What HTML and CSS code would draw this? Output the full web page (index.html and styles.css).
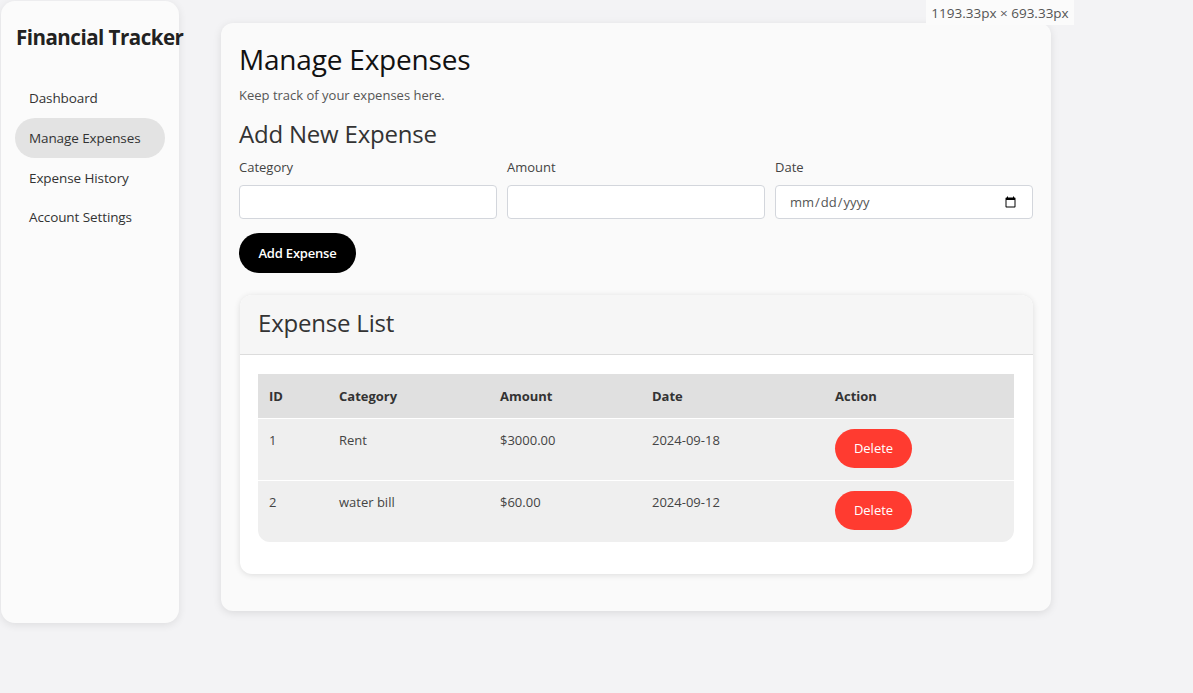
FILE: index.html
```html
<!DOCTYPE html>
<html lang="en">
<head>
<meta charset="utf-8">
<title>Financial Tracker</title>
<link rel="stylesheet" href="styles.css">
</head>
<body>
<div class="size-badge">1193.33px × 693.33px</div>
<div class="layout">
  <aside class="sidebar">
    <h2 class="brand">Financial Tracker</h2>
    <nav class="nav">
      <a class="nav-item">Dashboard</a>
      <a class="nav-item active">Manage Expenses</a>
      <a class="nav-item">Expense History</a>
      <a class="nav-item">Account Settings</a>
    </nav>
  </aside>
  <main class="main-card">
    <h1 class="page-title">Manage Expenses</h1>
    <p class="subtitle">Keep track of your expenses here.</p>
    <h2 class="section-title">Add New Expense</h2>
    <form class="expense-form">
      <div class="field">
        <label class="field-label">Category</label>
        <input class="field-input" type="text">
      </div>
      <div class="field">
        <label class="field-label">Amount</label>
        <input class="field-input" type="text">
      </div>
      <div class="field">
        <label class="field-label">Date</label>
        <input class="field-input date-input" type="date">
      </div>
    </form>
    <button class="btn-primary" type="button">Add Expense</button>
    <section class="list-card">
      <div class="list-header">
        <h2 class="list-title">Expense List</h2>
      </div>
      <div class="list-body">
        <table class="expense-table">
          <thead>
            <tr>
              <th class="col-id">ID</th>
              <th class="col-cat">Category</th>
              <th class="col-amt">Amount</th>
              <th class="col-date">Date</th>
              <th class="col-act">Action</th>
            </tr>
          </thead>
          <tbody>
            <tr>
              <td>1</td>
              <td>Rent</td>
              <td>$3000.00</td>
              <td>2024-09-18</td>
              <td><button class="btn-delete" type="button">Delete</button></td>
            </tr>
            <tr>
              <td>2</td>
              <td>water bill</td>
              <td>$60.00</td>
              <td>2024-09-12</td>
              <td><button class="btn-delete" type="button">Delete</button></td>
            </tr>
          </tbody>
        </table>
      </div>
    </section>
  </main>
</div>
</body>
</html>
```

FILE: styles.css
```css
* { box-sizing: border-box; }

html, body {
  margin: 0;
  padding: 0;
}

body {
  background: #f3f3f5;
  font-family: "Open Sans", "Noto Sans", sans-serif;
  color: #333;
  min-height: 693px;
}

.size-badge {
  position: absolute;
  top: 0;
  left: 926px;
  width: 148px;
  height: 25px;
  background: #fbfbfb;
  color: #555;
  font-size: 13.5px;
  line-height: 26px;
  text-align: center;
  letter-spacing: 0;
}

.layout {
  display: flex;
  align-items: flex-start;
  gap: 42px;
  padding: 1px 0 0 1px;
}

.sidebar {
  width: 178px;
  height: 622px;
  flex: none;
  background: #fbfbfb;
  border-radius: 14px;
  box-shadow: 0 2px 8px rgba(0,0,0,0.09);
  padding: 20px 14px;
}

.brand {
  margin: 0 0 0 1px;
  font-size: 20.5px;
  font-weight: 700;
  color: #222;
  white-space: nowrap;
  letter-spacing: -0.5px;
  line-height: 32px;
}

.nav {
  display: flex;
  flex-direction: column;
  margin-top: 25px;
}

.nav-item {
  display: block;
  height: 40px;
  line-height: 40px;
  padding: 0 14px;
  border-radius: 20px;
  font-size: 13.5px;
  color: #333;
  width: 150px;
  white-space: nowrap;
  letter-spacing: -0.1px;
}

.nav-item:nth-child(4) { margin-top: -1px; }

.nav-item.active {
  background: #e3e3e3;
}

.main-card {
  margin-top: 22px;
  width: 830px;
  background: #fafafa;
  border-radius: 12px;
  box-shadow: 0 2px 8px rgba(0,0,0,0.1);
  padding: 17px 18px 37px 18px;
  display: flex;
  flex-direction: column;
  align-items: flex-start;
}

.page-title {
  margin: 0;
  font-size: 28px;
  font-weight: 400;
  color: #111;
  line-height: 38px;
  letter-spacing: -0.2px;
}

.subtitle {
  margin: 8px 0 0 0;
  font-size: 13px;
  color: #555;
  line-height: 18px;
}

.section-title {
  margin: 14px 0 0 0;
  font-size: 24px;
  font-weight: 400;
  color: #333;
  line-height: 32px;
  letter-spacing: -0.2px;
}

.expense-form {
  margin-top: 8px;
  width: 100%;
  display: grid;
  grid-template-columns: 1fr 1fr 1fr;
  gap: 10px;
}

.field {
  display: flex;
  flex-direction: column;
}

.field-label {
  font-size: 13px;
  color: #444;
  line-height: 18px;
  margin-bottom: 9px;
}

.field-input {
  height: 34px;
  border: 1px solid #d3d6dc;
  border-radius: 4px;
  background: #fff;
  font-family: "Open Sans", "Noto Sans", sans-serif;
  font-size: 13px;
  padding: 0 13px;
  color: #555;
}

.btn-primary {
  margin-top: 14px;
  height: 40px;
  width: 117px;
  border: none;
  border-radius: 20px;
  background: #000;
  color: #fff;
  font-family: "Open Sans", "Noto Sans", sans-serif;
  font-size: 13px;
  font-weight: 600;
  letter-spacing: -0.2px;
}

.list-card {
  margin-top: 22px;
  width: 793px;
  margin-left: 1px;
  background: #fff;
  border-radius: 12px;
  box-shadow: 0 1px 6px rgba(0,0,0,0.12);
  overflow: hidden;
}

.list-header {
  background: #f6f6f6;
  border-bottom: 1px solid #dcdcdc;
  height: 60px;
  padding: 0 18px 5px 18px;
  display: flex;
  align-items: center;
}

.list-title {
  margin: 0;
  font-size: 24px;
  font-weight: 400;
  color: #333;
  letter-spacing: -0.2px;
}

.list-body {
  padding: 19px 18px 32px 18px;
}

.expense-table {
  width: 756px;
  border-collapse: collapse;
  border-radius: 0 0 12px 12px;
  overflow: hidden;
  table-layout: fixed;
  font-size: 13px;
}

.expense-table th {
  background: #e0e0e0;
  text-align: left;
  font-weight: 700;
  height: 44px;
  padding: 0 11px;
  color: #333;
  font-size: 13px;
}

.col-id { width: 70px; }
.col-cat { width: 161px; }
.col-amt { width: 152px; }
.col-date { width: 183px; }
.col-act { width: 190px; }

.expense-table td {
  background: #efefef;
  border-top: 1px solid #fff;
  padding: 11px 11px 10px 11px;
  vertical-align: top;
  color: #444;
  line-height: 20px;
}

.expense-table td:last-child { padding-top: 10px; padding-bottom: 12px; }

.btn-delete {
  height: 39px;
  width: 77px;
  border: none;
  border-radius: 20px;
  background: #ff3b30;
  color: #fff;
  font-family: "Open Sans", "Noto Sans", sans-serif;
  font-size: 13px;
  font-weight: 500;
  display: block;
}
```
